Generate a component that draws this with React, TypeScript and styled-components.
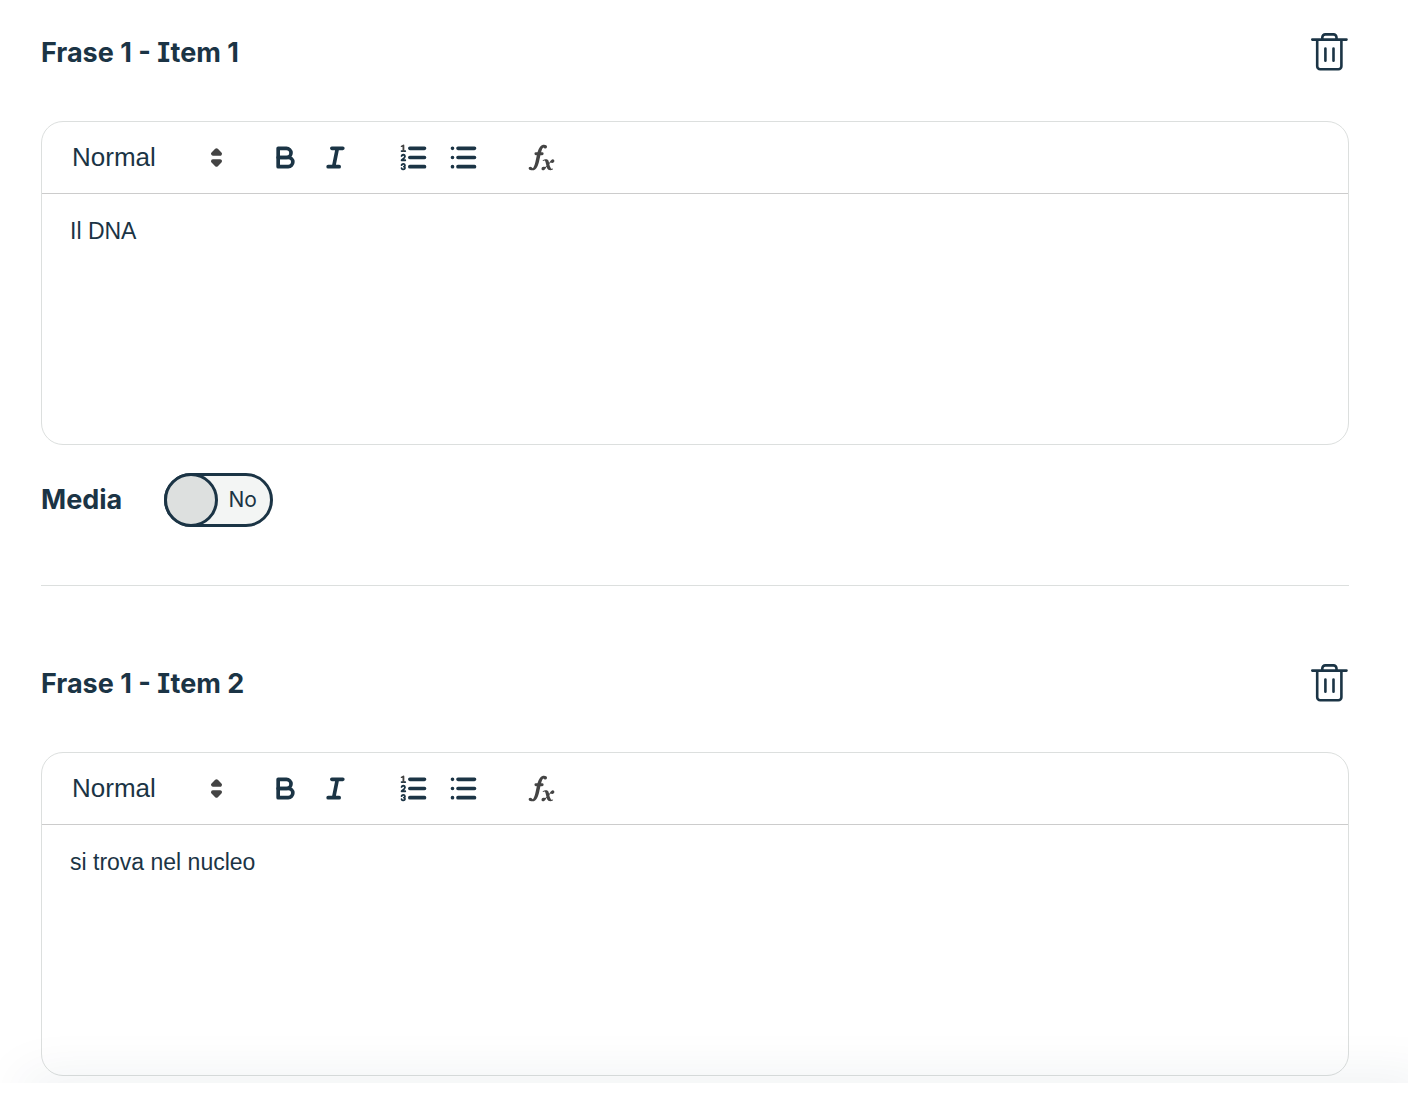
import React, { useId, useState } from "react";
import styled, { createGlobalStyle } from "styled-components";

const ink = "#1b3445";
const glyph = "#444444";
const line = "#dcdfde";

const GlobalStyle = createGlobalStyle`
  * { box-sizing: border-box; }
  body {
    margin: 0;
    background: #ffffff;
    color: ${ink};
    font-family: Inter, "Liberation Sans", sans-serif;
    font-feature-settings: "cv08";
  }
`;

const Page = styled.div`
  display: flex;
  flex-direction: column;
  min-height: 100vh;
  overflow: hidden;
`;

const Content = styled.main`
  flex: 1;
  padding: 32px 59px 0 41px;
`;

const Footer = styled.footer`
  position: relative;
  min-height: 21px;
  background: #ffffff;
  box-shadow: 24px 0 52px rgba(27, 52, 80, 0.13);
`;

const Item = styled.section`
  & + & {
    margin-top: 58px;
    padding-top: 77px;
    border-top: 1px solid ${line};
  }
`;

const ItemHeader = styled.header`
  display: flex;
  align-items: flex-start;
  justify-content: space-between;
  height: 42px;
  margin-bottom: 47px;
`;

const Title = styled.h2`
  margin: 0;
  font-size: 27px;
  line-height: 42px;
  font-weight: 700;
`;

const IconButton = styled.button`
  display: flex;
  padding: 0;
  border: 0;
  background: none;
  color: inherit;
  cursor: pointer;
`;

const Editor = styled.div`
  display: flex;
  flex-direction: column;
  border: 1px solid ${line};
  border-radius: 22px;
  overflow: hidden;
`;

const Toolbar = styled.div`
  display: flex;
  align-items: center;
  gap: 28px;
  height: 72px;
  padding: 0 30px;
  border-bottom: 1px solid #cccccc;
`;

const Group = styled.div`
  display: flex;
`;

const ToolButton = styled(IconButton)`
  width: 50px;
`;

const Picker = styled.div`
  display: grid;
  grid-template-columns: 128px 33px;
  align-items: center;
  margin-right: 8px;

  > * { grid-row: 1; }
  > svg { grid-column: 2; pointer-events: none; }
`;

const FormatSelect = styled.select`
  grid-column: 1 / 3;
  appearance: none;
  height: 40px;
  padding: 0 0 2px;
  border: 0;
  background: none;
  color: ${ink};
  font: 500 26px/38px "Liberation Sans", Arial, sans-serif;
`;

const TextArea = styled.textarea`
  height: 250px;
  padding: 21px 28px;
  border: 0;
  outline: 0;
  resize: none;
  background: transparent;
  color: ${ink};
  font: 400 23px/32px "Liberation Sans", Arial, sans-serif;
`;

const MediaRow = styled.div`
  display: flex;
  align-items: center;
  gap: 42px;
  margin-top: 28px;
`;

const MediaLabel = styled.label`
  font-size: 27px;
  line-height: 42px;
  font-weight: 700;
`;

const Switch = styled.label`
  position: relative;
  display: flex;
  align-items: center;
  width: 109px;
  height: 54px;
  border: 3px solid ${ink};
  border-radius: 27px;
  background: #f3f5f4;
  cursor: pointer;
`;

const SwitchInput = styled.input`
  position: absolute;
  inset: 0;
  margin: 0;
  opacity: 0;
`;

const Knob = styled.span<{ $on: boolean }>`
  flex: none;
  order: ${(p) => (p.$on ? 1 : 0)};
  width: 54px;
  height: 54px;
  margin: 0 -3px;
  border: 3px solid ${ink};
  border-radius: 50%;
  background: #dde0df;
`;

const SwitchText = styled.span`
  flex: 1;
  text-align: center;
  font-size: 21px;
  line-height: 28px;
`;

const ToolSvg = styled.svg.attrs({ viewBox: "0 0 18 18", width: 33, height: 33, "aria-hidden": true })`
  display: block;
  fill: none;
  stroke: ${ink};
  stroke-width: 2;
  stroke-linecap: round;
  stroke-linejoin: round;

  .thin { stroke-width: 1; }
  .solid { fill: ${glyph}; stroke: none; }
  .arrow { fill: ${glyph}; stroke: ${glyph}; }
`;

const TrashIcon = () => (
  <svg width="38" height="40" viewBox="0 0 38 40" fill="none" stroke={ink} strokeWidth="2.6" strokeLinecap="round" strokeLinejoin="round" aria-hidden="true">
    <path d="M1.3 7.6H35.5M11.3 7.6V5.4a3 3 0 0 1 3-3h8.2a3 3 0 0 1 3 3v2.2M6.2 7.6v26.7a3 3 0 0 0 3 3h18.2a3 3 0 0 0 3-3V7.6M14.4 16.6v12.2M22.5 16.6v12.2" />
  </svg>
);

const ArrowsIcon = () => (
  <ToolSvg>
    <polygon className="arrow" points="7 11 9 13 11 11 7 11" />
    <polygon className="arrow" points="7 7 9 5 11 7 7 7" />
  </ToolSvg>
);

const BoldIcon = () => (
  <ToolSvg>
    <path d="M5,4H9.5A2.5,2.5,0,0,1,12,6.5v0A2.5,2.5,0,0,1,9.5,9H5V4Z" />
    <path d="M5,9h5.5A2.5,2.5,0,0,1,13,11.5v0A2.5,2.5,0,0,1,10.5,14H5V9Z" />
  </ToolSvg>
);

const ItalicIcon = () => (
  <ToolSvg>
    <path d="M7 4H13M5 14H11M8 14L10 4" />
  </ToolSvg>
);

const OrderedIcon = () => (
  <ToolSvg>
    <path d="M7 4H15M7 9H15M7 14H15" />
    <path className="thin" d="M2.5 5.5H4.5" />
    <path className="solid" d="M3.5,6A0.5,0.5,0,0,1,3,5.5V3.085l-0.276.138A0.5,0.5,0,0,1,2.053,3c-0.124-.247-0.023-0.324.224-0.447l1-.5A0.5,0.5,0,0,1,4,2.5v3A0.5,0.5,0,0,1,3.5,6Z" />
    <path className="thin" d="M4.5,10.5h-2c0-.234,1.85-1.076,1.85-2.234A0.959,0.959,0,0,0,2.5,8.156" />
    <path className="thin" d="M2.5,14.846a0.959,0.959,0,0,0,1.85-.109A0.7,0.7,0,0,0,3.75,14a0.688,0.688,0,0,0,.6-0.736,0.959,0.959,0,0,0-1.85-.109" />
  </ToolSvg>
);

const BulletIcon = () => (
  <ToolSvg>
    <path d="M6 4H15M6 9H15M6 14H15M3 4H3M3 9H3M3 14H3" />
  </ToolSvg>
);

const FormulaIcon = () => (
  <ToolSvg>
    <path className="solid" d="M11.759,2.482a2.561,2.561,0,0,0-3.53.607A7.656,7.656,0,0,0,6.8,6.2C6.109,9.188,5.275,14.677,4.15,14.927a1.545,1.545,0,0,0-1.3-.933A0.922,0.922,0,0,0,2,15.036S1.954,16,4.119,16s3.091-2.691,3.7-5.553c0.177-.826.36-1.726,0.554-2.6L8.775,6.2c0.381-1.421.807-2.521,1.306-2.676a1.014,1.014,0,0,0,1.02.56A0.966,0.966,0,0,0,11.759,2.482Z" />
    <rect className="solid" height="1.6" rx="0.8" ry="0.8" width="5" x="5.15" y="6.2" />
    <path className="solid" d="M13.663,12.027a1.662,1.662,0,0,1,.266-0.276q0.193,0.069.456,0.138a2.1,2.1,0,0,0,.535.069,1.075,1.075,0,0,0,.767-0.3,1.044,1.044,0,0,0,.314-0.8,0.84,0.84,0,0,0-.238-0.619,0.8,0.8,0,0,0-.594-0.239,1.154,1.154,0,0,0-.781.3,4.607,4.607,0,0,0-.781,1q-0.091.15-.218,0.346l-0.246.38c-0.068-.288-0.137-0.582-0.212-0.885-0.459-1.847-2.494-.984-2.941-0.8-0.482.2-.353,0.647-0.094,0.529a0.869,0.869,0,0,1,1.281.585c0.217,0.751.377,1.436,0.527,2.038a5.688,5.688,0,0,1-.362.467,2.69,2.69,0,0,1-.264.271q-0.221-.08-0.471-0.147a2.029,2.029,0,0,0-.522-0.066,1.079,1.079,0,0,0-.768.3A1.058,1.058,0,0,0,9,15.131a0.82,0.82,0,0,0,.832.852,1.134,1.134,0,0,0,.787-0.3,5.11,5.11,0,0,0,.776-0.993q0.141-.219.215-0.34c0.046-.076.122-0.194,0.223-0.346a2.786,2.786,0,0,0,.918,1.726,2.582,2.582,0,0,0,2.376-.185c0.317-.181.212-0.565,0-0.494A0.807,0.807,0,0,1,14.176,15a5.159,5.159,0,0,1-.913-2.446l0,0Q13.487,12.24,13.663,12.027Z" />
  </ToolSvg>
);

function RichEditor({ label, value }: { label: string; value: string }) {
  return (
    <Editor>
      <Toolbar role="toolbar" aria-label={label}>
        <Picker>
          <FormatSelect aria-label="Formato" defaultValue="Normal">
            <option>Normal</option>
          </FormatSelect>
          <ArrowsIcon />
        </Picker>
        <Group>
          <ToolButton type="button" aria-label="Grassetto"><BoldIcon /></ToolButton>
          <ToolButton type="button" aria-label="Corsivo"><ItalicIcon /></ToolButton>
        </Group>
        <Group>
          <ToolButton type="button" aria-label="Elenco numerato"><OrderedIcon /></ToolButton>
          <ToolButton type="button" aria-label="Elenco puntato"><BulletIcon /></ToolButton>
        </Group>
        <Group>
          <ToolButton type="button" aria-label="Formula"><FormulaIcon /></ToolButton>
        </Group>
      </Toolbar>
      <TextArea aria-label={label} defaultValue={value} spellCheck={false} />
    </Editor>
  );
}

function MediaSwitch() {
  const id = useId();
  const [on, setOn] = useState(false);
  return (
    <MediaRow>
      <MediaLabel htmlFor={id}>Media</MediaLabel>
      <Switch>
        <SwitchInput id={id} type="checkbox" checked={on} onChange={(e) => setOn(e.target.checked)} />
        <Knob $on={on} />
        <SwitchText>{on ? "Sì" : "No"}</SwitchText>
      </Switch>
    </MediaRow>
  );
}

const items = [
  { title: "Frase 1 - Item 1", text: "Il DNA", media: true },
  { title: "Frase 1 - Item 2", text: "si trova nel nucleo", media: false },
];

export default function App() {
  return (
    <Page>
      <GlobalStyle />
      <Content>
        {items.map((item) => (
          <Item key={item.title}>
            <ItemHeader>
              <Title>{item.title}</Title>
              <IconButton type="button" aria-label={`Elimina ${item.title}`}><TrashIcon /></IconButton>
            </ItemHeader>
            <RichEditor label={item.title} value={item.text} />
            {item.media && <MediaSwitch />}
          </Item>
        ))}
      </Content>
      <Footer />
    </Page>
  );
}
